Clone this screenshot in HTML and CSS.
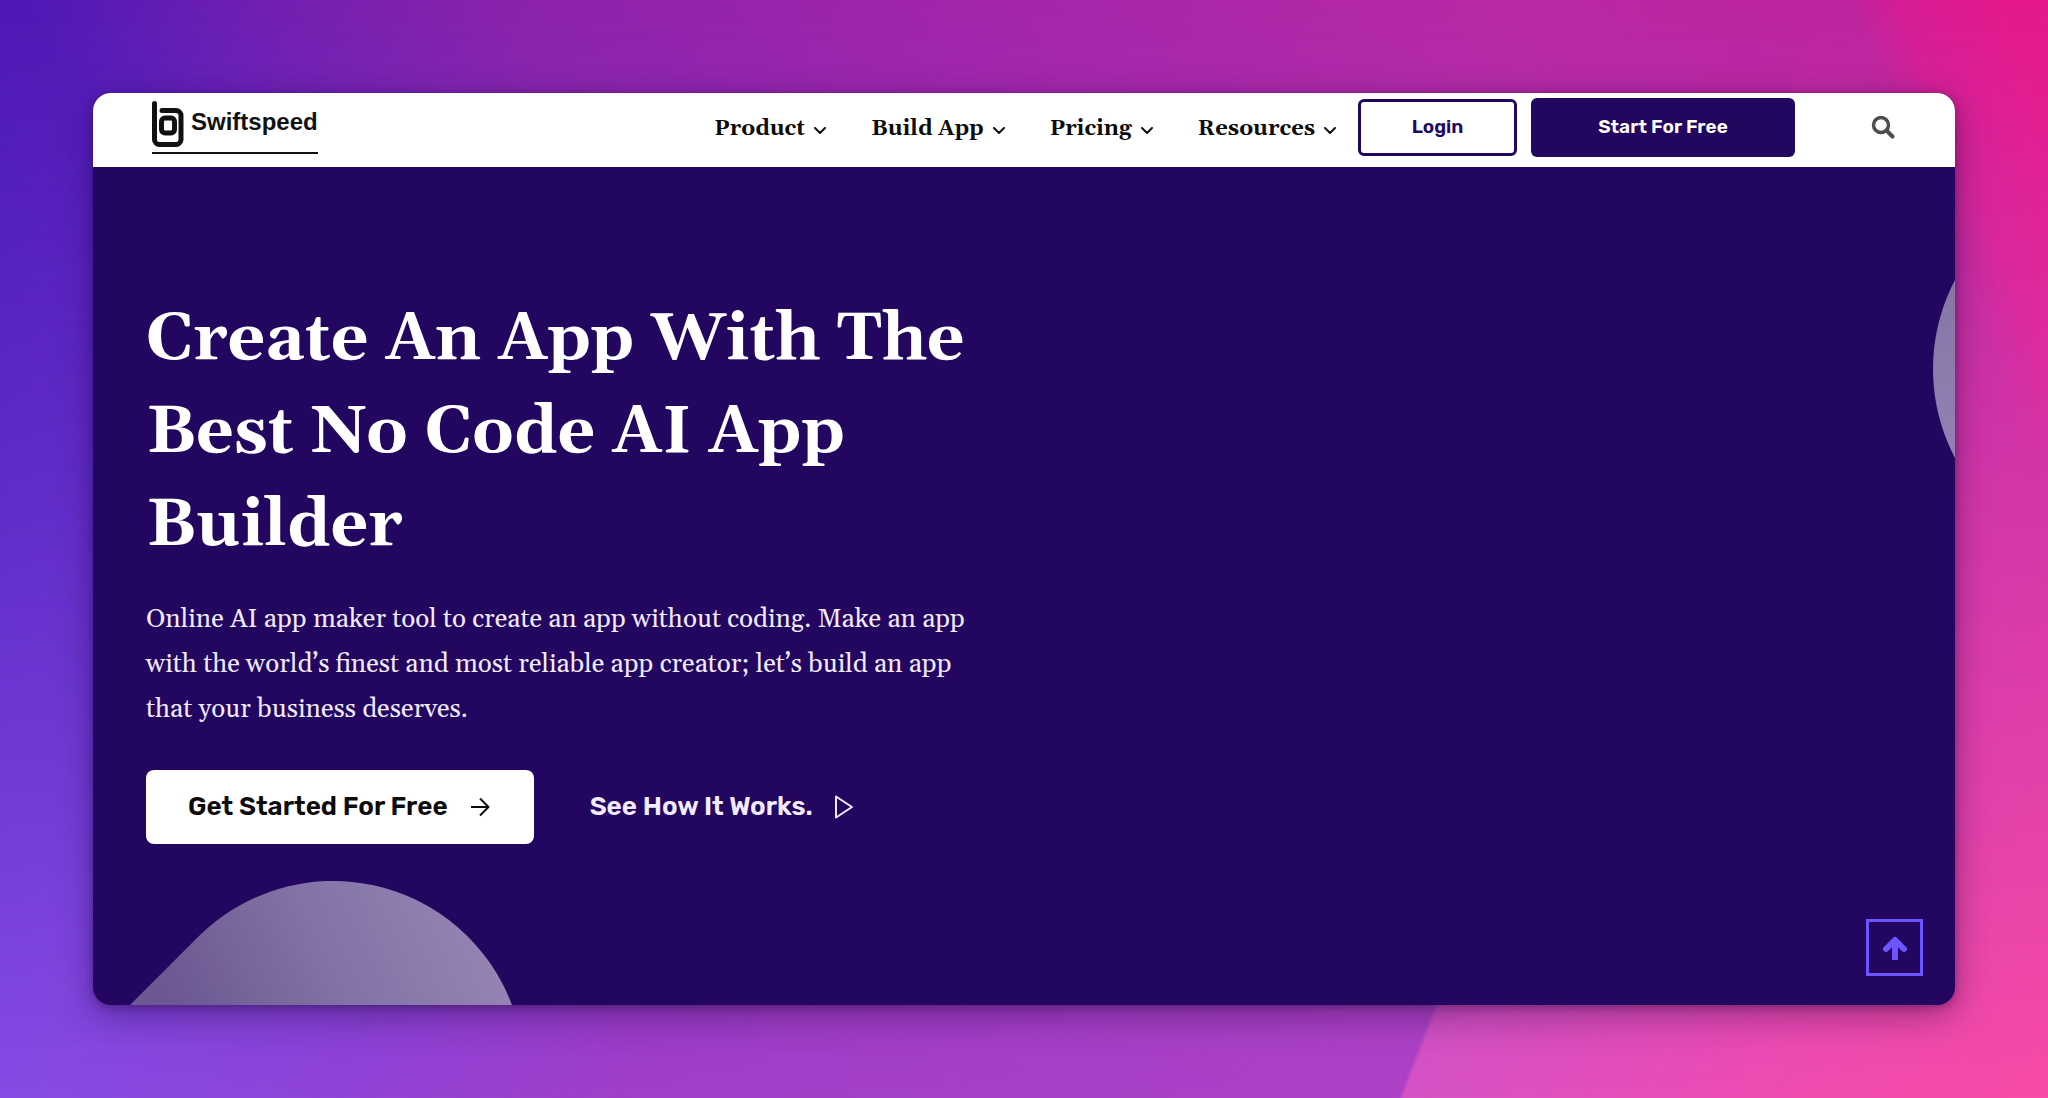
FILE: index.html
```html
<!DOCTYPE html>
<html lang="en">
<head>
<meta charset="utf-8">
<meta name="viewport" content="width=device-width, initial-scale=1">
<title>Swiftspeed</title>
<link rel="stylesheet" href="styles.css">
</head>
<body>
<div class="window">
  <header class="site-header">
    <a class="logo" href="#" aria-label="Swiftspeed home">
      <span class="logo-row">
        <svg class="logo-mark" viewBox="0 0 32 46" aria-hidden="true" fill="none" stroke="#111" stroke-linecap="round" stroke-linejoin="round">
          <path d="M2.500 2.500V38.500a5 5 0 0 0 5 5H24a5 5 0 0 0 5-5V14.500a5 5 0 0 0-5-5H10" stroke-width="5"/>
          <rect x="9.500" y="17" width="13" height="15" rx="3.500" stroke-width="5"/>
        </svg>
        <span class="logo-name">Swiftspeed</span>
      </span>
    </a>
    <nav class="nav" aria-label="Main">
      <a class="nav-link" href="#">Product <svg class="chevron" viewBox="0 0 12 8" aria-hidden="true"><path d="M1 1l5 5 5-5"/></svg></a>
      <a class="nav-link" href="#">Build App <svg class="chevron" viewBox="0 0 12 8" aria-hidden="true"><path d="M1 1l5 5 5-5"/></svg></a>
      <a class="nav-link" href="#">Pricing <svg class="chevron" viewBox="0 0 12 8" aria-hidden="true"><path d="M1 1l5 5 5-5"/></svg></a>
      <a class="nav-link" href="#">Resources <svg class="chevron" viewBox="0 0 12 8" aria-hidden="true"><path d="M1 1l5 5 5-5"/></svg></a>
    </nav>
    <div class="actions">
      <a class="btn btn-outline" href="#">Login</a>
      <a class="btn btn-solid" href="#">Start For Free</a>
      <button class="search" type="button" aria-label="Search">
        <svg viewBox="0 0 24 24" aria-hidden="true" fill="none" stroke="#4d4d4d" stroke-linecap="round"><circle cx="10" cy="10" r="7.500" stroke-width="3.500"/><path d="M16 16l5.500 5.500" stroke-width="4"/></svg>
      </button>
    </div>
  </header>
  <main class="hero">
    <div class="hero-copy">
      <h1 class="title">Create An App With The Best No Code AI App Builder</h1>
      <p class="lead">Online AI app maker tool to create an app without coding. Make an app with the world’s finest and most reliable app creator; let’s build an app that your business deserves.</p>
      <div class="cta-row">
        <a class="cta cta-primary" href="#">Get Started For Free
          <svg class="cta-icon" viewBox="0 0 24 24" aria-hidden="true"><path d="M3 12h17M12 3.500l8.500 8.500-8.500 8.500"/></svg></a>
        <a class="cta" href="#">See How It Works.
          <svg class="cta-icon" viewBox="0 0 24 24" aria-hidden="true"><path d="M3 1.500v21l16-10.500z"/></svg></a>
      </div>
    </div>
    <svg class="blob" viewBox="0 0 384 124" aria-hidden="true">
      <defs><linearGradient id="haze" gradientUnits="userSpaceOnUse" x1="60" y1="150" x2="340" y2="20"><stop offset="0" stop-color="#6d5891"/><stop offset=".5" stop-color="#8272a5"/><stop offset="1" stop-color="#9583b4"/></linearGradient></defs>
      <path fill="url(#haze)" d="M1 124L69 56A191 191 0 0 1 383 124z"/>
    </svg>
    <span class="disc"></span>
    <button class="to-top" type="button" aria-label="Back to top">
      <svg viewBox="0 0 28 28" aria-hidden="true" fill="none" stroke="#6a55ff" stroke-width="6" stroke-linejoin="round"><path d="M14 26V8"/><path d="M5 15l9-9 9 9" stroke-linecap="round"/></svg>
    </button>
  </main>
</div>
</body>
</html>
```
FILE: styles.css
```css
:root {
  --indigo: #22065f;
  --serif: Gelasio, Georgia, "Liberation Serif", serif;
  --sans: Rubik, Inter, "Liberation Sans", sans-serif;
}

* { box-sizing: border-box; }

body {
  margin: 0;
  min-height: 100vh;
  padding: 93px;
  position: relative;
  display: flex;
  font-family: var(--serif);
  background: linear-gradient(68deg, #4616b4 10%, #5019b6 19%, #6c1fb2 27%, #8a22ac 38%, #a426aa 58%, #b829a6 78%, #be249f 92%, #d51d94 94%, #e4198c 98%);
}

/* lighter sweep that grows towards the bottom edge */
body::before {
  content: "";
  position: absolute;
  inset: 0;
  background: linear-gradient(111deg, #7a45e2 0%, #864be4 17%, #8f44d8 30%, #a03eca 42%, #ad42c6 73.7%, #d553c6 73.9%, #ee4cb2 88%, #f74ba6 100%);
  -webkit-mask-image: linear-gradient(transparent, #000);
  mask-image: linear-gradient(transparent, #000);
}

.window {
  position: relative;
  flex: 1;
  min-width: 0;
  display: flex;
  flex-direction: column;
  overflow: hidden;
  border-radius: 18px;
  background: var(--indigo);
  box-shadow: 0 10px 36px rgba(20, 0, 50, .38), 0 2px 8px rgba(20, 0, 50, .3);
}

.site-header {
  display: flex;
  align-items: center;
  height: 74px;
  padding: 0 60px 6px 59px;
  background: #fff;
}

.logo {
  display: block;
  padding-bottom: 5px;
  border-bottom: 2px solid #111;
  color: #111;
  text-decoration: none;
}
.logo-row { display: flex; align-items: flex-start; gap: 7px; }
.logo-mark { width: 32px; height: 46px; }
.logo-name { font: 700 24px/42px "Liberation Sans", sans-serif; }

.nav { display: flex; gap: 45px; margin-left: auto; padding-top: 3px; }
.nav-link {
  display: flex;
  align-items: center;
  gap: 9px;
  color: #0c0c0c;
  font-size: 22px;
  font-weight: 700;
  line-height: 32px;
  text-decoration: none;
}
.chevron { width: 12px; height: 8px; margin-top: 4px; fill: none; stroke: #111; stroke-width: 2; stroke-linecap: round; stroke-linejoin: round; }

.actions { display: flex; align-items: center; gap: 14px; margin-left: 22px; }
.btn {
  display: flex;
  align-items: center;
  justify-content: center;
  font: 600 19px/24px var(--sans);
  text-decoration: none;
  border-radius: 6px;
}
.btn-outline { width: 159px; height: 57px; border: 3px solid var(--indigo); color: var(--indigo); }
.btn-solid { width: 264px; height: 59px; background: var(--indigo); color: #fff; }
.search { margin-left: 62px; padding: 0; border: 0; background: none; cursor: pointer; }
.search svg { display: block; width: 24px; height: 24px; }

.hero {
  position: relative;
  flex: 1;
  padding: 127px 53px 160px;
}
.hero-copy { max-width: 850px; }
.title { margin: 0; color: #fff; font-size: 66px; font-weight: 700; line-height: 93px; }
.lead { margin: 24px 0 38px; color: #f1eafd; font-size: 26px; line-height: 45px; }

.cta-row { display: flex; align-items: center; gap: 14px; }
.cta {
  display: flex;
  align-items: center;
  gap: 20px;
  height: 74px;
  padding: 0 42px;
  border-radius: 8px;
  color: #f3ebff;
  font: 600 26px/32px var(--sans);
  text-decoration: none;
}
.cta-primary { background: #fff; color: #0c0c0c; }
.cta-icon { width: 24px; height: 24px; fill: none; stroke: currentColor; stroke-width: 2; stroke-linejoin: round; }

.blob { position: absolute; left: 36px; bottom: 0; width: 384px; height: 124px; }
.disc {
  position: absolute;
  top: 11px;
  right: -360px;
  width: 382px;
  height: 382px;
  border-radius: 50%;
  background: linear-gradient(#8474a6 20%, #9482b4 80%);
}
.to-top {
  position: absolute;
  right: 32px;
  bottom: 29px;
  display: grid;
  place-items: center;
  width: 57px;
  height: 57px;
  padding: 0;
  border: 3px solid #6a55ff;
  background: none;
  cursor: pointer;
}
.to-top svg { width: 28px; height: 28px; }
```
